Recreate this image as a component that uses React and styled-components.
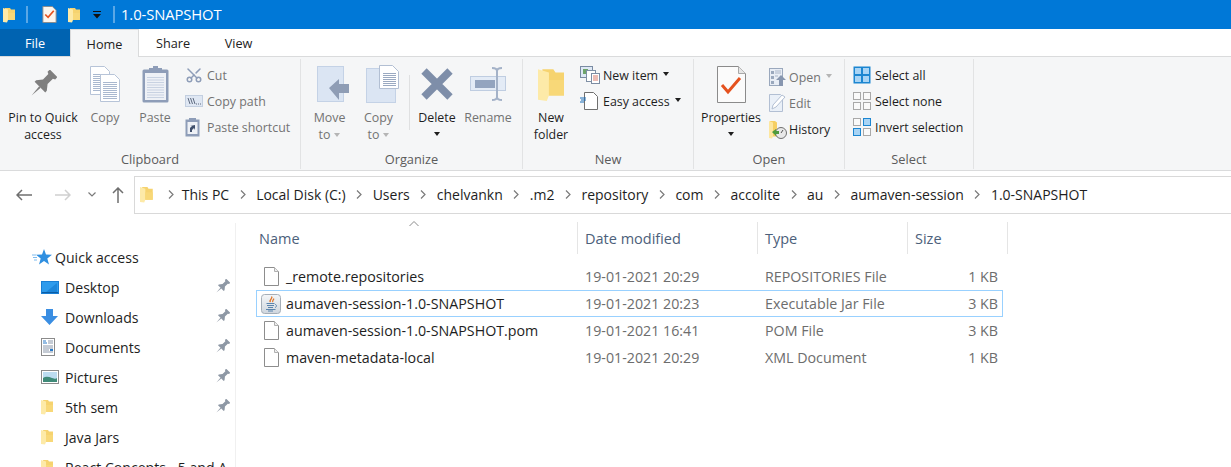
import React from 'react';
import styled, { createGlobalStyle } from 'styled-components';
import { Scissors } from 'lucide-react';

const Global = createGlobalStyle`
  html, body { margin: 0; padding: 0; background: #fff; overflow: hidden; }
  body { font-family: "Open Sans", "Noto Sans", sans-serif; font-size: 14px; color: #1e1e1e; }
`;

const Window = styled.div`
  width: 1231px;
  height: 467px;
  overflow: hidden;
  display: flex;
  flex-direction: column;
`;

/* ---------- title bar ---------- */
const TitleBar = styled.div`
  height: 29px;
  flex: none;
  background: #0078d7;
  display: flex;
  align-items: center;
  padding-left: 3px;
  color: #fff;
`;
const TitleSep = styled.div`
  width: 2px;
  height: 17px;
  background: #5aa7e6;
  margin: ${p => p.$margin};
`;
const TitleGap = styled.span`
  width: ${p => p.$w}px;
  flex: none;
`;
const TitleText = styled.div`
  font-size: 14.8px;
  margin: -1px 0 0 6px;
  letter-spacing: -0.1px;
`;

/* ---------- tabs ---------- */
const TabRow = styled.div`
  height: 28px;
  flex: none;
  display: flex;
  background: #fff;
  border-bottom: 1px solid #dadbdc;
  box-sizing: border-box;
`;
const Tab = styled.div`
  width: ${p => p.$w}px;
  height: ${p => (p.$active ? 28 : 27)}px;
  box-sizing: border-box;
  display: flex;
  align-items: center;
  justify-content: center;
  font-size: 12.7px;
  color: ${p => (p.$file ? '#fff' : '#222')};
  background: ${p => (p.$file ? '#0063b1' : p.$active ? '#f5f6f7' : '#fff')};
  border: ${p => (p.$active ? '1px solid #dadbdc' : 'none')};
  border-bottom: none;
`;

/* ---------- ribbon ---------- */
const Ribbon = styled.div`
  height: 114px;
  flex: none;
  box-sizing: border-box;
  display: flex;
  background: #f5f6f7;
  border-bottom: 1px solid #dadbdc;
`;
const Group = styled.div`
  width: ${p => p.$w}px;
  box-sizing: border-box;
  border-right: 1px solid #e2e3e4;
  margin-top: 2px;
  margin-bottom: 1px;
  display: flex;
  flex-direction: column;
`;
const GroupBody = styled.div`
  flex: 1;
  display: flex;
  padding-left: ${p => p.$pad || 0}px;
`;
const GroupLabel = styled.div`
  height: 22px;
  text-align: center;
  font-size: 12.8px;
  color: #5b5b5b;
  line-height: 24px;
`;
const LargeButton = styled.div`
  width: ${p => p.$w}px;
  flex: none;
  display: flex;
  flex-direction: column;
  align-items: center;
  color: ${p => (p.$off ? '#737373' : '#1e1e1e')};
`;
const LargeIcon = styled.div`
  height: 50px;
  display: flex;
  align-items: center;
  justify-content: center;
  margin-left: ${p => p.$shift || 0}px;
`;
const ButtonText = styled.div`
  font-size: 12.4px;
  line-height: 17px;
  text-align: center;
  white-space: nowrap;
`;
const Caret = styled.span`
  display: inline-block;
  width: 0;
  height: 0;
  border-left: 3.5px solid transparent;
  border-right: 3.5px solid transparent;
  border-top: 4px solid ${p => (p.$off ? '#b5b5b5' : '#1e1e1e')};
  margin: ${p => p.$margin || '0 0 2px 3px'};
`;
const CaretLine = styled.div`
  height: 15px;
  display: flex;
  align-items: center;
  justify-content: center;
`;
const SmallColumn = styled.div`
  display: flex;
  flex-direction: column;
  padding-top: ${p => p.$top || 3}px;
  margin-left: ${p => p.$left || 0}px;
`;
const SmallButton = styled.div`
  height: 26px;
  display: flex;
  align-items: center;
  font-size: 12.4px;
  white-space: nowrap;
  color: ${p => (p.$off ? '#737373' : '#1e1e1e')};
`;
const SmallIcon = styled.div`
  width: ${p => p.$w || 22}px;
  display: flex;
  align-items: center;
  flex: none;
`;
const VDivider = styled.div`
  width: 1px;
  height: 55px;
  background: #dfe0e1;
  margin: 16px 0 0 ${p => p.$left || 0}px;
  flex: none;
`;

/* ---------- address bar ---------- */
const AddressRow = styled.div`
  height: 44px;
  flex: none;
  display: flex;
  align-items: center;
  box-sizing: border-box;
  padding-top: 3px;
`;
const NavButtons = styled.div`
  width: 134px;
  flex: none;
  display: flex;
  align-items: center;
  height: 38px;
`;
const NavGlyph = styled.svg`
  flex: none;
  margin-left: ${p => p.$left}px;
`;
const AddressBox = styled.div`
  flex: 1;
  height: 38px;
  box-sizing: border-box;
  border: 1px solid #d9d9d9;
  border-right: none;
  display: flex;
  align-items: center;
  padding-left: 5px;
  font-size: 14px;
  white-space: nowrap;
`;
const Crumb = styled.span`
  color: #1e1e1e;
`;
const Chevron = styled.svg`
  margin: 0 ${p => p.$right || 10.5}px 0 ${p => p.$left || 10.5}px;
  flex: none;
`;

/* ---------- body ---------- */
const Main = styled.div`
  flex: 1;
  display: flex;
  min-height: 0;
`;
const NavPane = styled.div`
  width: 236px;
  flex: none;
  box-sizing: border-box;
  border-right: 1px solid #f0f0f0;
  margin-top: 8px;
  padding-top: 19px;
  display: flex;
  flex-direction: column;
`;
const NavItem = styled.div`
  height: 30px;
  flex: none;
  display: flex;
  align-items: center;
  padding-left: ${p => (p.$head ? 32 : 41)}px;
  font-size: 14.1px;
  position: relative;
  white-space: nowrap;
`;
const NavIcon = styled.div`
  width: ${p => (p.$head ? 23 : 24)}px;
  display: flex;
  align-items: center;
  flex: none;
`;
const NavPin = styled.div`
  position: absolute;
  left: 215px;
  top: 7px;
  display: flex;
`;
const Table = styled.div`
  padding: 7px 0 0 20px;
  position: relative;
`;
const HeaderRow = styled.div`
  display: grid;
  grid-template-columns: 322px 180px 150px 100px;
  height: 32px;
  margin-bottom: 9px;
`;
const HeaderCell = styled.div`
  border-right: 1px solid #e5e5e5;
  display: flex;
  align-items: center;
  padding-left: ${p => p.$pad}px;
  font-size: 14.5px;
  color: #4c607a;
`;
const SortCaret = styled.svg`
  position: absolute;
  left: 173px;
  top: 6px;
`;
const FileRow = styled.div`
  display: grid;
  grid-template-columns: 322px 180px 150px 93px;
  height: 27px;
  box-sizing: border-box;
  border: 1px solid ${p => (p.$selected ? '#99d1ff' : 'transparent')};
  width: 747px;
  align-items: center;
  font-size: 14.25px;
`;
const NameCell = styled.div`
  display: flex;
  align-items: center;
  padding-left: ${p => (p.$java ? 4 : 7)}px;
  gap: ${p => (p.$java ? 5 : 7)}px;
  white-space: nowrap;
`;
const DataCell = styled.div`
  color: #6d6d6d;
  padding-left: 6px;
  white-space: nowrap;
`;
const SizeCell = styled.div`
  color: #6d6d6d;
  text-align: right;
  padding-right: 4px;
`;

/* ---------- icons ---------- */
const Folder = ({ h = 14 }) => (
  <svg width={h * 0.75} height={h} viewBox="0 0 12 16" preserveAspectRatio="none" style={{ flex: 'none' }}>
    <path d="M2 1h5l1 1.500h4V13H2z" fill="#f6d36f" />
    <path d="M0 1l5 1.500V13L4 15.500 0 15z" fill="#fdeaa8" />
    <path d="M5 6h7v7H5z" fill="#f8d878" />
  </svg>
);
const FilePage = () => (
  <svg width="15" height="19" viewBox="0 0 15 19">
    <path d="M.5.5h10l4 4v14H.5z" fill="#fff" stroke="#8d8d8d" />
    <path d="M10.500.5v4h4" fill="#eee" stroke="#b0b0b0" />
  </svg>
);
const Pin = ({ size = 14, fill = '#8e98a5' }) => (
  <svg width={size} height={size} viewBox="0 0 26 26">
    <g transform="rotate(45 13 13)" fill={fill}>
      <path d="M8 -1h10v3l-2 1v7l4 5v2H6v-2l4-5V3L8 2z" />
      <path d="M12 17h2l-1 11z" />
    </g>
  </svg>
);
const Lines = ({ x, y, w, n, step = 2, color = '#a9b8cf' }) => (
  <>
    {Array.from({ length: n }).map((_, i) => (
      <rect key={i} x={x} y={y + i * step} width={w} height="1" fill={color} />
    ))}
  </>
);
const CopyIcon = () => (
  <svg width="30" height="36" viewBox="0 0 30 36">
    <path d="M.5.5h14l5 5v23H.5z" fill="#fff" stroke="#b7c4d8" />
    <Lines x={3} y={8} w={14} n={9} />
    <path d="M10.500 8.500h14l5 5v22h-19z" fill="#fff" stroke="#b7c4d8" />
    <Lines x={13} y={16} w={14} n={9} />
  </svg>
);
const PasteIcon = () => (
  <svg width="27" height="37" viewBox="0 0 27 37">
    <rect x=".5" y="3.500" width="26" height="33" rx="1.500" fill="#8e9db8" />
    <rect x="3" y="7" width="21" height="27" fill="#eef1f6" />
    <Lines x={5} y={11} w={17} n={9} step={2.5} color="#c8d2e2" />
    <rect x="7" y="2" width="13" height="5" fill="#8e9db8" />
    <rect x="11" y="0" width="5" height="3" fill="#8e9db8" />
  </svg>
);
const CopyPathIcon = () => (
  <svg width="18" height="12" viewBox="0 0 18 12">
    <rect x=".5" y=".5" width="17" height="11" fill="#dfe7f3" stroke="#c3cfe0" />
    <path d="M3 3l2 6M5.500 3l2 6M8 3l2 6" stroke="#5f6b80" strokeWidth="1" />
    <path d="M11 9h1M13 9h1M15 9h1" stroke="#5f6b80" />
  </svg>
);
const PasteShortcut = () => (
  <svg width="15" height="20" viewBox="0 0 15 20">
    <rect x=".5" y="2.500" width="14" height="17" fill="#8e9db8" />
    <rect x="2.500" y="5" width="10" height="12" fill="#eef1f6" />
    <rect x="4" y="1" width="7" height="3" fill="#8e9db8" />
    <path d="M5 15v-4l2-2h-2l5-1v5l-1-2-2 2v2z" fill="#3f4f6b" />
  </svg>
);
const MoveIcon = () => (
  <svg width="33" height="36" viewBox="0 0 33 36">
    <rect x=".5" y=".5" width="26" height="35" fill="#dbe5f3" stroke="#c4d2e6" />
    <path d="M12 22L22 13v5h10v9H22v7z" fill="#8f9db5" />
  </svg>
);
const CopyToIcon = () => (
  <svg width="33" height="38" viewBox="0 0 33 38">
    <rect x=".5" y="3.500" width="29" height="34" fill="#dbe5f3" stroke="#c4d2e6" />
    <path d="M13.500 .5h13l6 6v17h-19z" fill="#fff" stroke="#b2bfd3" />
    <Lines x={17} y={8} w={13} n={7} color="#9aa9c1" />
  </svg>
);
const DeleteIcon = () => (
  <svg width="32" height="32" viewBox="0 0 32 32">
    <path d="M3 3l26 26M29 3L3 29" stroke="#7e8ea9" strokeWidth="7.500" />
  </svg>
);
const RenameIcon = () => (
  <svg width="36" height="34" viewBox="0 0 36 34">
    <rect x=".5" y="9.500" width="35" height="14" fill="#e3ebf6" stroke="#bfcde1" />
    <rect x="5" y="13" width="20" height="8" fill="#93a4bf" />
    <path d="M22 1c3 0 5 1 5 3v26c0 2-2 3-5 3M32 1c-3 0-5 1-5 3v26c0 2 2 3 5 3" fill="none" stroke="#a4b2c8" strokeWidth="2" />
  </svg>
);
const NewItemIcon = () => (
  <svg width="20" height="18" viewBox="0 0 20 18">
    <rect x=".5" y=".5" width="12" height="11" fill="#dfe9f5" stroke="#7a8ba3" />
    <rect x="3" y="3" width="5" height="5" fill="#6fa56b" />
    <rect x="6.500" y="4.500" width="9" height="11" fill="#fff" stroke="#8090a5" />
    <rect x="11.500" y="7.500" width="8" height="10" fill="#fff" stroke="#7d8da3" />
    <path d="M13 10h5M13 12h5M13 14h5" stroke="#d97a6a" />
  </svg>
);
const EasyAccessIcon = () => (
  <svg width="18" height="18" viewBox="0 0 18 18">
    <path d="M4.500 .5h9l4 4v13h-13z" fill="#fff" stroke="#6f6f6f" />
    <path d="M0 6h6M1 8h5M0 10h4" stroke="#1d6fb8" />
  </svg>
);
const PropertiesIcon = () => (
  <svg width="29" height="37" viewBox="0 0 29 37">
    <path d="M.5.5h21l7 7v29H.5z" fill="#fbfbfb" stroke="#8b8b8b" />
    <path d="M21.500.5v7h7" fill="#e6e6e6" stroke="#a8a8a8" />
    <path d="M5 19l6 7L23 12" fill="none" stroke="#e5521f" strokeWidth="3" />
  </svg>
);
const SmallProperties = () => (
  <svg width="15" height="17" viewBox="0 0 15 18">
    <path d="M.5.5h10l4 4v13H.5z" fill="#fbf6ee" stroke="#8a8a8a" />
    <path d="M3 9l3 3 6-7" fill="none" stroke="#e5521f" strokeWidth="1.800" />
  </svg>
);
const OpenIcon = () => (
  <svg width="17" height="18" viewBox="0 0 17 18">
    <rect x=".5" y=".5" width="13" height="17" fill="#e8edf5" stroke="#9aa8bd" />
    <path d="M2 3h3v3H2zM2 8h3v3H2zM2 13h3v3H2z" fill="#9aa8bd" />
    <path d="M6 3h6M6 5h6M6 8h3" stroke="#aab6c9" />
    <path d="M7 12l5-5 5 5h-3v6H10v-6z" fill="#8796af" />
  </svg>
);
const EditIcon = () => (
  <svg width="17" height="18" viewBox="0 0 17 18">
    <path d="M.5.5h11l2 2v15H.5z" fill="#eaf0f8" stroke="#b2bfd3" />
    <path d="M3 15l1-4 9-10 3 2-9 10z" fill="#fff" stroke="#b2bfd3" />
  </svg>
);
const HistoryIcon = () => (
  <svg width="18" height="19" viewBox="0 0 18 19">
    <path d="M1 1h5l2 1.500v14H1z" fill="#f6cf63" />
    <path d="M0 1l4 1.500v14l-1 2-3-.5z" fill="#fde7a0" />
    <circle cx="12" cy="13" r="5.500" fill="#e8e8e8" stroke="#707070" />
    <path d="M12 13l2-3" stroke="#555" />
    <path d="M3 12l4-3v2h3v3H7v2z" fill="#4f9b3e" />
  </svg>
);
const SelectGrid = ({ on }) => (
  <svg width="18" height="18" viewBox="0 0 18 18">
    {[[0, 0], [10, 0], [0, 10], [10, 10]].map(([x, y], i) => (
      <rect
        key={i}
        x={x + 0.5}
        y={y + 0.5}
        width="7"
        height="7"
        fill={on[i] ? '#a8d4f5' : '#fafafa'}
        stroke={on[i] ? '#1c86d1' : '#a9a9a9'}
      />
    ))}
  </svg>
);
const SelectAllIcon = () => (
  <svg width="18" height="18" viewBox="0 0 18 18">
    <rect x=".5" y=".5" width="17" height="17" fill="#1c86d1" />
    <path d="M2 2h6v6H2zM10 2h6v6h-6zM2 10h6v6H2zM10 10h6v6h-6z" fill="#a8d4f5" />
  </svg>
);
const StarIcon = () => (
  <svg width="20" height="16" viewBox="0 0 20 16">
    <path d="M12 0l2 5.500 6 .2-4.700 3.700 1.700 6-5-3.500-5 3.500 1.700-6L4 5.700l6-.2z" fill="#2f8fe0" />
    <path d="M0 6h4M1 8.500h4M2 11h3" stroke="#7fbcef" />
  </svg>
);
const DesktopIcon = () => (
  <svg width="18" height="13" viewBox="0 0 18 13">
    <rect width="18" height="13" fill="#1a7fd4" />
    <rect x="1" y="1" width="16" height="10" fill="#2e9bec" />
    <path d="M5 11L16 2v9z" fill="#1d86da" />
    <rect x="1" y="11" width="16" height="1" fill="#0b5da6" />
  </svg>
);
const DownloadIcon = () => (
  <svg width="17" height="16" viewBox="0 0 17 16">
    <path d="M5 0h7v7h5l-8.500 9L0 7h5z" fill="#3a8ee2" />
  </svg>
);
const DocumentIcon = () => (
  <svg width="14" height="18" viewBox="0 0 14 18">
    <rect x=".5" y=".5" width="13" height="17" fill="#fff" stroke="#8b8b8b" />
    <path d="M2 3h3M2 5h4" stroke="#2a7bc8" />
    <path d="M7 3h5M7 5h5M2 8h10M2 10h10M2 12h6M2 14h10" stroke="#8a97aa" />
    <rect x="9" y="11" width="3" height="2" fill="#2a7bc8" />
  </svg>
);
const PictureIcon = () => (
  <svg width="18" height="14" viewBox="0 0 18 14">
    <rect x=".5" y=".5" width="17" height="13" fill="#fff" stroke="#8b8b8b" />
    <rect x="2" y="2" width="14" height="10" fill="#bcdcf0" />
    <path d="M2 8c3-2 6-1 9 0s4 1 5 0v4H2z" fill="#3f8a78" />
  </svg>
);
const JavaIcon = () => (
  <svg width="20" height="20" viewBox="0 0 20 20">
    <defs>
      <linearGradient id="javaBg" x1="0" y1="0" x2="0" y2="1">
        <stop offset="0" stopColor="#f4f6f8" />
        <stop offset="1" stopColor="#cfd6de" />
      </linearGradient>
    </defs>
    <rect x=".5" y=".5" width="19" height="19" rx="3" fill="url(#javaBg)" stroke="#a5aeb8" />
    <path d="M10.500 2.500c2 2-3 3-1 5.500M12.500 4.500c1 1.500-2 2-.5 3.500" fill="none" stroke="#e0762a" strokeWidth="1.300" />
    <path d="M5.500 9.500h8M6 11.500h7M7 13.500h5M5 15.500h9.500M7 17h5M14 10.500c2 0 2 2.500 0 3" fill="none" stroke="#5b84ad" />
  </svg>
);
const ChevronPath = () => <path d="M1 .5l4 4-4 4" fill="none" stroke="#7a7a7a" strokeWidth="1.200" />;

const crumbs = ['This PC', 'Local Disk (C:)', 'Users', 'chelvankn', '.m2', 'repository', 'com', 'accolite', 'au', 'aumaven-session', '1.0-SNAPSHOT'];

const navItems = [
  { name: 'Desktop', icon: <DesktopIcon />, pin: true },
  { name: 'Downloads', icon: <DownloadIcon />, pin: true },
  { name: 'Documents', icon: <DocumentIcon />, pin: true },
  { name: 'Pictures', icon: <PictureIcon />, pin: true },
  { name: '5th sem', icon: <Folder h={16} />, pin: true },
  { name: 'Java Jars', icon: <Folder h={16} /> },
  { name: 'React Concepts - 5 and A', icon: <Folder h={16} /> },
];

const files = [
  { name: '_remote.repositories', date: '19-01-2021 20:29', type: 'REPOSITORIES File', size: '1 KB' },
  { name: 'aumaven-session-1.0-SNAPSHOT', date: '19-01-2021 20:23', type: 'Executable Jar File', size: '3 KB', java: true },
  { name: 'aumaven-session-1.0-SNAPSHOT.pom', date: '19-01-2021 16:41', type: 'POM File', size: '3 KB' },
  { name: 'maven-metadata-local', date: '19-01-2021 20:29', type: 'XML Document', size: '1 KB' },
];

export default function App() {
  return (
    <Window>
      <Global />
      <TitleBar>
        <Folder h={16} />
        <TitleSep $margin="0 14px 0 11px" />
        <SmallProperties />
        <TitleGap $w={11} />
        <Folder h={16} />
        <svg width="8" height="8" viewBox="0 0 8 8" style={{ marginLeft: 13 }}>
          <path d="M0 0h8v1H0zM0 3h8L4 7.500z" fill="#111" />
        </svg>
        <TitleSep $margin="0 0 0 12px" />
        <TitleText>1.0-SNAPSHOT</TitleText>
      </TitleBar>

      <TabRow>
        <Tab $w={70} $file>File</Tab>
        <Tab $w={69} $active>Home</Tab>
        <Tab $w={68}>Share</Tab>
        <Tab $w={63}>View</Tab>
      </TabRow>

      <Ribbon>
        <Group $w={301}>
          <GroupBody $pad={8}>
            <LargeButton $w={70}>
              <LargeIcon><Pin size={28} fill="#7f7f7f" /></LargeIcon>
              <ButtonText>Pin to Quick<br />access</ButtonText>
            </LargeButton>
            <LargeButton $w={54} $off>
              <LargeIcon><CopyIcon /></LargeIcon>
              <ButtonText>Copy</ButtonText>
            </LargeButton>
            <LargeButton $w={46} $off>
              <LargeIcon><PasteIcon /></LargeIcon>
              <ButtonText>Paste</ButtonText>
            </LargeButton>
            <SmallColumn $left={7}>
              <SmallButton $off>
                <SmallIcon><Scissors size={18} color="#8e9db8" style={{ transform: 'rotate(-90deg)' }} /></SmallIcon>Cut
              </SmallButton>
              <SmallButton $off>
                <SmallIcon><CopyPathIcon /></SmallIcon>Copy path
              </SmallButton>
              <SmallButton $off>
                <SmallIcon><PasteShortcut /></SmallIcon>Paste shortcut
              </SmallButton>
            </SmallColumn>
          </GroupBody>
          <GroupLabel>Clipboard</GroupLabel>
        </Group>

        <Group $w={222}>
          <GroupBody $pad={4}>
            <LargeButton $w={49} $off>
              <LargeIcon $shift={7}><MoveIcon /></LargeIcon>
              <ButtonText>Move<br />to<Caret $off $margin="0 0 2px 4px" /></ButtonText>
            </LargeButton>
            <LargeButton $w={49} $off>
              <LargeIcon $shift={8}><CopyToIcon /></LargeIcon>
              <ButtonText>Copy<br />to<Caret $off $margin="0 0 2px 4px" /></ButtonText>
            </LargeButton>
            <VDivider $left={6} />
            <LargeButton $w={54}>
              <LargeIcon><DeleteIcon /></LargeIcon>
              <ButtonText>Delete</ButtonText>
              <CaretLine><Caret $margin="0" /></CaretLine>
            </LargeButton>
            <LargeButton $w={48} $off>
              <LargeIcon><RenameIcon /></LargeIcon>
              <ButtonText>Rename</ButtonText>
            </LargeButton>
          </GroupBody>
          <GroupLabel>Organize</GroupLabel>
        </Group>

        <Group $w={171}>
          <GroupBody $pad={3}>
            <LargeButton $w={50}>
              <LargeIcon><Folder h={35} /></LargeIcon>
              <ButtonText>New<br />folder</ButtonText>
            </LargeButton>
            <SmallColumn $left={4}>
              <SmallButton>
                <SmallIcon $w={23}><NewItemIcon /></SmallIcon>New item<Caret $margin="0 0 3px 5px" />
              </SmallButton>
              <SmallButton>
                <SmallIcon $w={23}><EasyAccessIcon /></SmallIcon>Easy access<Caret $margin="0 0 3px 5px" />
              </SmallButton>
            </SmallColumn>
          </GroupBody>
          <GroupLabel>New</GroupLabel>
        </Group>

        <Group $w={151}>
          <GroupBody $pad={4}>
            <LargeButton $w={66}>
              <LargeIcon><PropertiesIcon /></LargeIcon>
              <ButtonText>Properties</ButtonText>
              <CaretLine><Caret $margin="0" /></CaretLine>
            </LargeButton>
            <SmallColumn $left={5} $top={5}>
              <SmallButton $off>
                <SmallIcon $w={20}><OpenIcon /></SmallIcon>Open<Caret $off $margin="0 0 2px 5px" />
              </SmallButton>
              <SmallButton $off>
                <SmallIcon $w={20}><EditIcon /></SmallIcon>Edit
              </SmallButton>
              <SmallButton>
                <SmallIcon $w={20}><HistoryIcon /></SmallIcon>History
              </SmallButton>
            </SmallColumn>
          </GroupBody>
          <GroupLabel>Open</GroupLabel>
        </Group>

        <Group $w={129}>
          <GroupBody $pad={8}>
            <SmallColumn>
              <SmallButton>
                <SmallIcon><SelectAllIcon /></SmallIcon>Select all
              </SmallButton>
              <SmallButton>
                <SmallIcon><SelectGrid on={[0, 0, 0, 0]} /></SmallIcon>Select none
              </SmallButton>
              <SmallButton>
                <SmallIcon><SelectGrid on={[0, 1, 1, 0]} /></SmallIcon>Invert selection
              </SmallButton>
            </SmallColumn>
          </GroupBody>
          <GroupLabel>Select</GroupLabel>
        </Group>
      </Ribbon>

      <AddressRow>
        <NavButtons>
          <NavGlyph $left={16} width="16" height="12" viewBox="0 0 16 12">
            <path d="M6 1L1 6l5 5M1 6h15" fill="none" stroke="#6f6f6f" strokeWidth="1.500" />
          </NavGlyph>
          <NavGlyph $left={23} width="16" height="12" viewBox="0 0 16 12">
            <path d="M10 1l5 5-5 5M15 6H0" fill="none" stroke="#d0d0d0" strokeWidth="1.500" />
          </NavGlyph>
          <NavGlyph $left={17} width="8" height="5" viewBox="0 0 8 5">
            <path d="M.5.5L4 4 7.500.5" fill="none" stroke="#7a7a7a" strokeWidth="1.200" />
          </NavGlyph>
          <NavGlyph $left={16} width="12" height="16" viewBox="0 0 12 16">
            <path d="M6 16V1M1 6l5-5 5 5" fill="none" stroke="#6f6f6f" strokeWidth="1.500" />
          </NavGlyph>
        </NavButtons>
        <AddressBox>
          <Folder h={17} />
          <Chevron $left={15} $right={8} width="6" height="9" viewBox="0 0 6 9">
            <ChevronPath />
          </Chevron>
          {crumbs.map((c, i) => (
            <React.Fragment key={c}>
              {i > 0 && (
                <Chevron width="6" height="9" viewBox="0 0 6 9">
                  <ChevronPath />
                </Chevron>
              )}
              <Crumb>{c}</Crumb>
            </React.Fragment>
          ))}
        </AddressBox>
      </AddressRow>

      <Main>
        <NavPane>
          <NavItem $head>
            <NavIcon $head><StarIcon /></NavIcon>Quick access
          </NavItem>
          {navItems.map(n => (
            <NavItem key={n.name}>
              <NavIcon>{n.icon}</NavIcon>
              {n.name}
              {n.pin && <NavPin><Pin size={15} /></NavPin>}
            </NavItem>
          ))}
        </NavPane>
        <Table>
          <SortCaret width="10" height="6" viewBox="0 0 10 6">
            <path d="M.5 5L5 .5 9.500 5" fill="none" stroke="#8a8a8a" />
          </SortCaret>
          <HeaderRow>
            <HeaderCell $pad={3}>Name</HeaderCell>
            <HeaderCell $pad={7}>Date modified</HeaderCell>
            <HeaderCell $pad={7}>Type</HeaderCell>
            <HeaderCell $pad={7}>Size</HeaderCell>
          </HeaderRow>
          {files.map(f => (
            <FileRow key={f.name} $selected={f.java}>
              <NameCell $java={f.java}>
                {f.java ? <JavaIcon /> : <FilePage />}
                {f.name}
              </NameCell>
              <DataCell>{f.date}</DataCell>
              <DataCell>{f.type}</DataCell>
              <SizeCell>{f.size}</SizeCell>
            </FileRow>
          ))}
        </Table>
      </Main>
    </Window>
  );
}
